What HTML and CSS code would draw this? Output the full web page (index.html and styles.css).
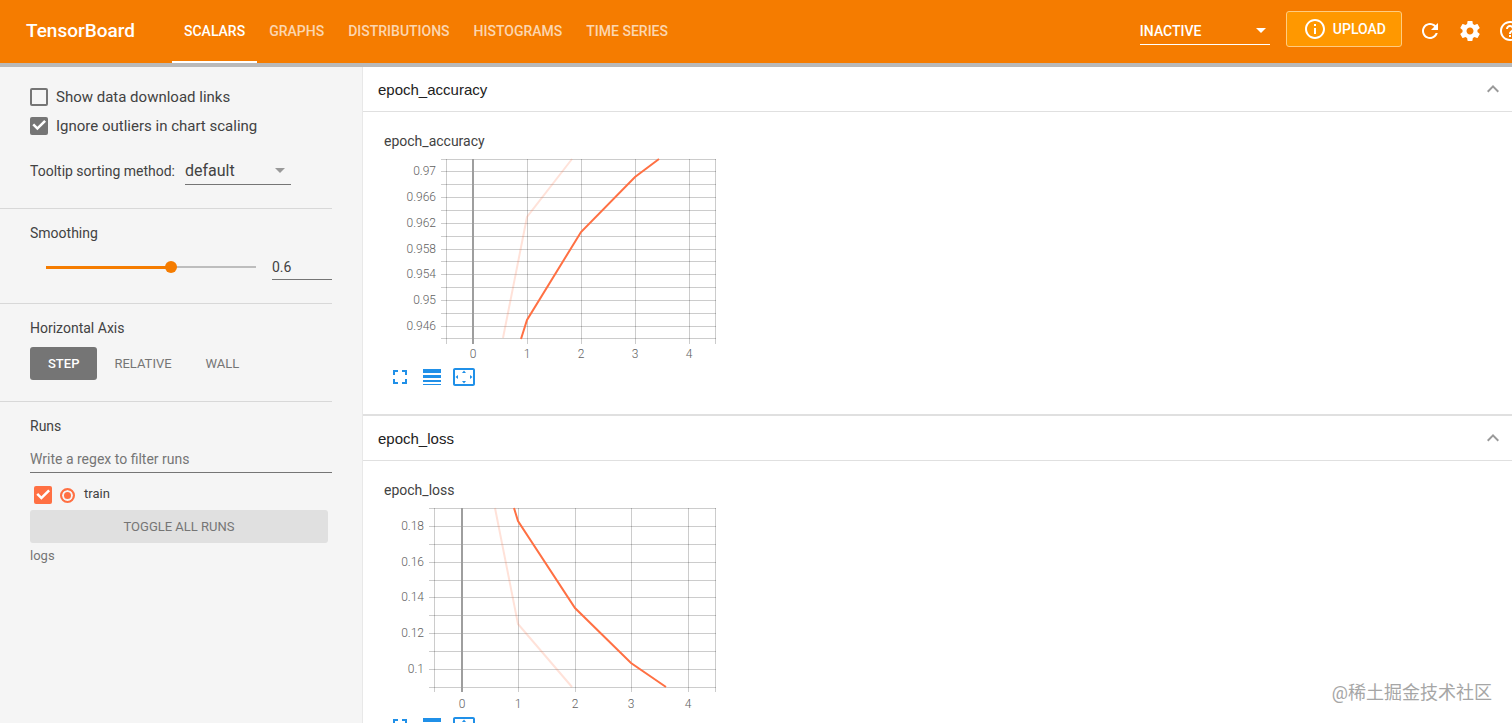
FILE: index.html
```html
<!DOCTYPE html>
<html lang="en">
<head>
    <meta charset="UTF-8">
    <meta name="viewport" content="width=device-width, initial-scale=1.0">
    <title>TensorBoard</title>
    <link rel="stylesheet" href="styles.css">
</head>
<body>
    <!-- shared icons -->
    <svg class="icon-defs" aria-hidden="true">
        <symbol id="icon-info" viewBox="0 0 24 24"><path d="M11 17h2v-6h-2v6zm1-15C6.48 2 2 6.48 2 12s4.48 10 10 10 10-4.48 10-10S17.52 2 12 2zm0 18c-4.41 0-8-3.59-8-8s3.59-8 8-8 8 3.59 8 8-3.59 8-8 8zM11 9h2V7h-2v2z"/></symbol>
        <symbol id="icon-refresh" viewBox="0 0 24 24"><path d="M17.65 6.35C16.2 4.9 14.21 4 12 4c-4.42 0-7.99 3.58-7.99 8s3.57 8 7.99 8c3.73 0 6.84-2.55 7.73-6h-2.08c-.82 2.33-3.04 4-5.65 4-3.31 0-6-2.69-6-6s2.69-6 6-6c1.66 0 3.14.69 4.22 1.78L13 11h7V4l-2.35 2.35z"/></symbol>
        <symbol id="icon-settings" viewBox="0 0 24 24"><path d="M19.43 12.98c.04-.32.07-.64.07-.98s-.03-.66-.07-.98l2.11-1.65c.19-.15.24-.42.12-.64l-2-3.46c-.12-.22-.39-.3-.61-.22l-2.49 1c-.52-.4-1.08-.73-1.69-.98l-.38-2.65C14.46 2.18 14.25 2 14 2h-4c-.25 0-.46.18-.49.42l-.38 2.65c-.61.25-1.17.59-1.69.98l-2.49-1c-.23-.09-.49 0-.61.22l-2 3.46c-.13.22-.07.49.12.64l2.11 1.65c-.04.32-.07.65-.07.98s.03.66.07.98l-2.11 1.65c-.19.15-.24.42-.12.64l2 3.46c.12.22.39.3.61.22l2.49-1c.52.4 1.08.73 1.69.98l.38 2.65c.03.24.24.42.49.42h4c.25 0 .46-.18.49-.42l.38-2.65c.61-.25 1.17-.59 1.69-.98l2.49 1c.23.09.49 0 .61-.22l2-3.46c.12-.22.07-.49-.12-.64l-2.11-1.65zM12 15.5c-1.93 0-3.5-1.57-3.5-3.5s1.57-3.5 3.5-3.5 3.5 1.57 3.5 3.5-1.57 3.5-3.5 3.5z"/></symbol>
        <symbol id="icon-help" viewBox="0 0 24 24"><path d="M11 18h2v-2h-2v2zm1-16C6.48 2 2 6.48 2 12s4.48 10 10 10 10-4.48 10-10S17.52 2 12 2zm0 18c-4.41 0-8-3.59-8-8s3.59-8 8-8 8 3.59 8 8-3.59 8-8 8zm0-14c-2.21 0-4 1.79-4 4h2c0-1.1.9-2 2-2s2 .9 2 2c0 2-3 1.75-3 5h2c0-2.25 3-2.5 3-5 0-2.21-1.79-4-4-4z"/></symbol>
        <symbol id="icon-arrow" viewBox="0 0 10 5"><path d="M0 0h10L5 5z"/></symbol>
        <symbol id="icon-expand-less" viewBox="0 0 24 24"><path d="M12 8l-6 6 1.41 1.41L12 10.83l4.59 4.58L18 14z"/></symbol>
        <symbol id="icon-fullscreen" viewBox="0 0 24 24"><path d="M7 14H5v5h5v-2H7v-3zm-2-4h2V7h3V5H5v5zm12 7h-3v2h5v-5h-2v3zM14 5v2h3v3h2V5h-5z"/></symbol>
        <symbol id="icon-line-weight" viewBox="0 0 24 24"><path d="M3 17h18v-2H3v2zm0 3h18v-1H3v1zm0-7h18v-3H3v3zm0-9v4h18V4H3z"/></symbol>
        <symbol id="icon-overscan" viewBox="0 0 24 24"><path d="M12.01 5.5L10 8h4l-1.99-2.5zM18 10v4l2.5-1.99L18 10zM6 10l-2.5 2.01L6 14v-4zm8 6h-4l2.01 2.5L14 16zm7-13H3c-1.1 0-2 .9-2 2v14c0 1.1.9 2 2 2h18c1.1 0 2-.9 2-2V5c0-1.1-.9-2-2-2zm0 16.01H3V4.99h18v14.02z"/></symbol>
    </svg>

    <header class="toolbar">
        <h1 class="brand">TensorBoard</h1>
        <nav class="tabs">
            <a href="#scalars" class="tab active">SCALARS</a>
            <a href="#graphs" class="tab">GRAPHS</a>
            <a href="#distributions" class="tab">DISTRIBUTIONS</a>
            <a href="#histograms" class="tab">HISTOGRAMS</a>
            <a href="#timeseries" class="tab">TIME SERIES</a>
        </nav>
        <div class="toolbar-actions">
            <div class="select-box inactive-box">
                <select aria-label="Inactive plugins">
                    <option>INACTIVE</option>
                </select>
                <svg class="arrow"><use href="#icon-arrow"/></svg>
            </div>
            <button class="upload-btn">
                <svg class="icon"><use href="#icon-info"/></svg>
                UPLOAD
            </button>
            <div class="icon-buttons">
                <button class="icon-btn" aria-label="Reload"><svg class="icon"><use href="#icon-refresh"/></svg></button>
                <button class="icon-btn" aria-label="Settings"><svg class="icon"><use href="#icon-settings"/></svg></button>
                <button class="icon-btn" aria-label="Help"><svg class="icon"><use href="#icon-help"/></svg></button>
            </div>
        </div>
    </header>

    <div class="dashboard">
        <aside class="sidebar">
            <section class="settings">
                <label class="check-row"><input type="checkbox" class="checkbox"> Show data download links</label>
                <label class="check-row"><input type="checkbox" class="checkbox" checked> Ignore outliers in chart scaling</label>
                <div class="tooltip-row">
                    <label for="sorting">Tooltip sorting method:</label>
                    <div class="select-box sorting-box">
                        <select id="sorting">
                            <option>default</option>
                        </select>
                        <svg class="arrow"><use href="#icon-arrow"/></svg>
                    </div>
                </div>
            </section>

            <section class="settings">
                <h3><label for="smoothing">Smoothing</label></h3>
                <div class="slider-row">
                    <input type="range" id="smoothing" class="slider" min="0" max="1" step="0.1" value="0.6">
                    <input type="text" class="smoothing-value" aria-label="Smoothing value" value="0.6">
                </div>
            </section>

            <section class="settings axis">
                <h3>Horizontal Axis</h3>
                <div class="axis-buttons">
                    <button class="axis-btn selected">STEP</button>
                    <button class="axis-btn">RELATIVE</button>
                    <button class="axis-btn">WALL</button>
                </div>
            </section>

            <section class="settings runs">
                <h3>Runs</h3>
                <input type="text" class="regex-input" aria-label="Filter runs" placeholder="Write a regex to filter runs">
                <div class="run-row">
                    <input type="checkbox" id="run-train" class="checkbox run-color" checked>
                    <input type="radio" class="run-radio" aria-label="Only train" checked>
                    <label for="run-train">train</label>
                </div>
                <button class="toggle-btn">TOGGLE ALL RUNS</button>
                <div class="logdir">logs</div>
            </section>
        </aside>

        <main class="center">
            <section class="category">
                <button class="category-header">
                    epoch_accuracy
                    <svg class="icon"><use href="#icon-expand-less"/></svg>
                </button>
                <div class="card">
                    <h4>epoch_accuracy</h4>
                    <svg class="chart" width="332" height="204" role="img" aria-label="epoch_accuracy">
                        <path class="grid" d="M57 1H332M57 13H332M57 26H332M57 39H332M57 52H332M57 65H332M57 78H332M57 91H332M57 103H332M57 116H332M57 129H332M57 142H332M57 155H332M57 168H332M57 180H332"/>
                        <path class="grid" d="M62 1V186M143 1V186M197 1V186M251 1V186M305 1V186M331 1V186"/>
                        <path class="zero" d="M89 1V186"/>
                        <path class="line raw" d="M119 180L143 59L188 1"/>
                        <path class="line" d="M137 181L143 162L197 74L251 19L275 1"/>
                        <g class="y-labels">
                            <text x="52" y="17">0.97</text>
                            <text x="52" y="43">0.966</text>
                            <text x="52" y="69">0.962</text>
                            <text x="52" y="95">0.958</text>
                            <text x="52" y="120">0.954</text>
                            <text x="52" y="146">0.95</text>
                            <text x="52" y="172">0.946</text>
                        </g>
                        <g class="x-labels">
                            <text x="89" y="200">0</text>
                            <text x="143" y="200">1</text>
                            <text x="197" y="200">2</text>
                            <text x="251" y="200">3</text>
                            <text x="305" y="200">4</text>
                        </g>
                    </svg>
                    <div class="card-buttons">
                        <button aria-label="Toggle full screen"><svg class="icon"><use href="#icon-fullscreen"/></svg></button>
                        <button aria-label="Toggle log scale"><svg class="icon"><use href="#icon-line-weight"/></svg></button>
                        <button aria-label="Fit domain to data"><svg class="icon"><use href="#icon-overscan"/></svg></button>
                    </div>
                </div>
            </section>

            <section class="category">
                <button class="category-header">
                    epoch_loss
                    <svg class="icon"><use href="#icon-expand-less"/></svg>
                </button>
                <div class="card">
                    <h4>epoch_loss</h4>
                    <svg class="chart" width="332" height="204" role="img" aria-label="epoch_loss">
                        <path class="grid" d="M45 1H332M45 19H332M45 37H332M45 55H332M45 73H332M45 90H332M45 108H332M45 126H332M45 144H332M45 162H332M45 180H332"/>
                        <path class="grid" d="M50 1V185M134 1V185M191 1V185M247 1V185M304 1V185M331 1V185"/>
                        <path class="zero" d="M78 1V185"/>
                        <path class="line raw" d="M111 1L134 117L188 180"/>
                        <path class="line" d="M130 1L134 14L191 101L247 156L282 180"/>
                        <g class="y-labels">
                            <text x="40" y="23">0.18</text>
                            <text x="40" y="59">0.16</text>
                            <text x="40" y="94">0.14</text>
                            <text x="40" y="130">0.12</text>
                            <text x="40" y="166">0.1</text>
                        </g>
                        <g class="x-labels">
                            <text x="78" y="201">0</text>
                            <text x="134" y="201">1</text>
                            <text x="191" y="201">2</text>
                            <text x="247" y="201">3</text>
                            <text x="304" y="201">4</text>
                        </g>
                    </svg>
                    <div class="card-buttons">
                        <button aria-label="Toggle full screen"><svg class="icon"><use href="#icon-fullscreen"/></svg></button>
                        <button aria-label="Toggle log scale"><svg class="icon"><use href="#icon-line-weight"/></svg></button>
                        <button aria-label="Fit domain to data"><svg class="icon"><use href="#icon-overscan"/></svg></button>
                    </div>
                </div>
            </section>
        </main>
    </div>

    <div class="watermark">@稀土掘金技术社区</div>
</body>
</html>
```
FILE: styles.css
```css
* {
    box-sizing: border-box;
}

body {
    margin: 0;
    height: 100vh;
    display: flex;
    flex-direction: column;
    overflow: hidden;
    background-color: #f5f5f5;
    color: #424242;
    font-family: Roboto, "Noto Sans CJK SC", sans-serif;
    font-size: 14px;
}

h1, h3, h4 {
    margin: 0;
    font-weight: 400;
}

button, input, select {
    font: inherit;
    color: inherit;
    margin: 0;
    padding: 0;
    border: none;
    background: none;
    border-radius: 0;
    outline: none;
}

button {
    cursor: pointer;
}

.icon-defs {
    display: none;
}

.icon {
    display: block;
    width: 24px;
    height: 24px;
    fill: currentColor;
}

/* Top toolbar */
.toolbar {
    flex: none;
    display: flex;
    align-items: stretch;
    height: 67px;
    padding-left: 26px;
    overflow: hidden;
    background-color: #f57c00;
    border-bottom: 4px solid #b9b9b9;
    color: #fff;
}

.brand {
    align-self: center;
    width: 146px;
    padding-bottom: 2px;
    font-size: 19px;
    font-weight: 500;
}

.tabs {
    display: flex;
}

.tab {
    display: flex;
    align-items: center;
    padding: 0 12px;
    border-bottom: 2px solid transparent;
    color: rgba(255, 255, 255, 0.7);
    font-weight: 500;
    text-decoration: none;
}

.tab.active {
    color: #fff;
    border-bottom-color: #fff;
}

.toolbar-actions {
    display: flex;
    align-items: center;
    gap: 16px;
    margin-left: auto;
    /* the last icon runs past the window edge */
    margin-right: -18px;
    padding-bottom: 5px;
}

.select-box {
    display: flex;
    align-items: center;
    height: 28px;
    padding-right: 6px;
    border-bottom: 1px solid #757575;
}

.select-box select {
    flex: 1;
    min-width: 0;
    appearance: none;
}

.arrow {
    width: 10px;
    height: 5px;
    fill: #999;
}

.inactive-box {
    width: 130px;
    margin-top: 4px;
    padding-right: 4px;
    border-bottom-color: #fff;
    font-weight: 500;
}

.inactive-box option {
    color: #424242;
}

.inactive-box .arrow {
    fill: #fff;
}

.upload-btn {
    display: flex;
    align-items: center;
    gap: 6px;
    height: 36px;
    padding: 0 15px 0 16px;
    border: 1px solid #ffcc80;
    border-radius: 3px;
    background-color: #ff9800;
    font-weight: 500;
}

.icon-buttons {
    display: flex;
    margin: 4px 0 0 -8px;
}

.icon-btn {
    width: 40px;
    height: 40px;
    padding: 8px;
}

/* Sidebar */
.dashboard {
    flex: 1;
    display: flex;
    min-height: 0;
}

.sidebar {
    flex: none;
    width: 362px;
    padding-right: 30px;
}

.settings {
    padding: 14px 0 23px 30px;
    border-bottom: 1px solid #d8d8d8;
}

.settings:first-child {
    padding-top: 15px;
}

.settings h3 {
    font-size: 14px;
    line-height: 20px;
}

.check-row {
    display: flex;
    align-items: center;
    gap: 8px;
    height: 29px;
    font-size: 15px;
}

.checkbox {
    flex: none;
    appearance: none;
    width: 18px;
    height: 18px;
    border: 2px solid #757575;
    border-radius: 2px;
}

.checkbox:checked {
    border: none;
    background-color: #757575;
}

.checkbox:checked::before {
    content: '';
    display: block;
    width: 18px;
    height: 18px;
    background-color: #fff;
    clip-path: polygon(13% 49%, 23% 39%, 41% 57%, 79% 19%, 89% 29%, 41% 77%);
}

.tooltip-row {
    display: flex;
    align-items: center;
    gap: 10px;
    margin-top: 17px;
}

.sorting-box {
    width: 106px;
    font-size: 16px;
}

.slider-row {
    display: flex;
    align-items: center;
    gap: 16px;
    margin-top: 11px;
    padding-left: 16px;
}

.slider {
    flex: 1;
    min-width: 0;
    height: 12px;
    appearance: none;
}

.slider::-webkit-slider-runnable-track {
    height: 3px;
    background:
        linear-gradient(#f57c00, #f57c00) 0 0 / 60% 3px no-repeat,
        linear-gradient(#bdbdbd, #bdbdbd) 0 0 / 100% 2px no-repeat;
}

.slider::-webkit-slider-thumb {
    appearance: none;
    width: 12px;
    height: 12px;
    margin-top: -5px;
    border-radius: 50%;
    background-color: #f57c00;
}

.smoothing-value {
    width: 60px;
    height: 26px;
    border-bottom: 1px solid #757575;
}

.axis {
    padding-bottom: 21px;
}

.axis-buttons {
    display: flex;
    margin-top: 9px;
}

.axis-btn {
    height: 33px;
    padding: 0 17px;
    border-radius: 3px;
    color: #757575;
    font-size: 13px;
}

.axis-btn.selected {
    padding: 0 18px;
    background-color: #757575;
    color: #fff;
    font-weight: 500;
}

.runs {
    border-bottom: none;
}

.regex-input {
    display: block;
    width: 100%;
    height: 27px;
    margin-top: 10px;
    border-bottom: 1px solid #757575;
}

.regex-input::placeholder {
    color: #757575;
}

.run-row {
    display: flex;
    align-items: center;
    gap: 8px;
    height: 22px;
    margin: 11px 0 4px;
    padding-left: 4px;
    font-size: 13px;
}

.run-row label {
    padding: 0 0 4px 1px;
}

.run-color:checked {
    background-color: #ff7043;
}

.run-radio {
    appearance: none;
    width: 15px;
    height: 15px;
    border: 2px solid #ff7043;
    border-radius: 50%;
    background-color: #ff7043;
    box-shadow: inset 0 0 0 2px #f5f5f5;
}

.toggle-btn {
    display: block;
    width: 298px;
    height: 33px;
    border-radius: 3px;
    background-color: #e0e0e0;
    color: #757575;
    font-size: 13px;
}

.logdir {
    margin-top: 5px;
    color: #757575;
    font-size: 13px;
    line-height: 16px;
}

/* Charts */
.center {
    flex: 1;
    min-width: 0;
    overflow: hidden;
    background-color: #fff;
    border-left: 1px solid #e8e8e8;
}

.category-header {
    display: flex;
    align-items: center;
    justify-content: space-between;
    width: 100%;
    height: 45px;
    padding: 0 7px 0 15px;
    border-bottom: 1px solid #e0e0e0;
    color: #212121;
    font-family: "Liberation Sans", Arial, sans-serif;
    font-size: 15px;
}

.category-header .icon {
    fill: #999;
}

.card {
    padding: 19px 21px 25px;
    border-bottom: 2px solid #e0e0e0;
}

.card h4 {
    font-size: 14px;
    line-height: 20px;
    margin-bottom: 7px;
}

.chart {
    display: block;
    font-size: 12px;
    font-weight: 300;
}

.grid, .zero {
    fill: none;
    stroke: #000;
    stroke-opacity: 0.2;
    shape-rendering: crispEdges;
}

.zero {
    stroke: #9e9e9e;
    stroke-width: 2;
    stroke-opacity: 1;
}

.line {
    fill: none;
    stroke: #ff7043;
    stroke-width: 2;
}

.line.raw {
    stroke-opacity: 0.2;
}

.y-labels, .x-labels {
    fill: #616161;
    text-anchor: end;
}

.x-labels {
    text-anchor: middle;
}

.card-buttons {
    display: flex;
    gap: 8px;
    margin-top: 3px;
    padding-left: 4px;
    color: #2090e8;
}

.watermark {
    position: absolute;
    right: 20px;
    bottom: 17px;
    color: #a6a6a6;
    font-size: 18px;
    line-height: 26px;
}
```
